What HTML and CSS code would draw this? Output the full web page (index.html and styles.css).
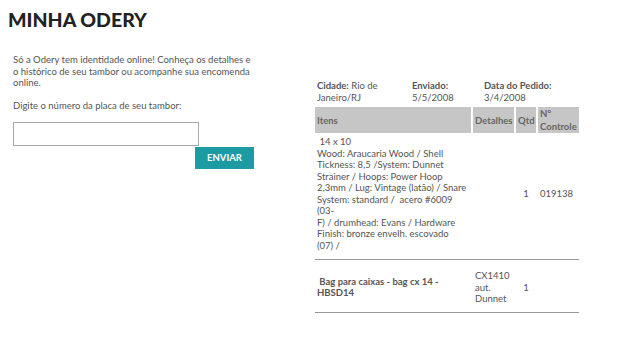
FILE: index.html
```html
<!DOCTYPE html>
<html lang="pt-BR">
<head>
    <meta charset="UTF-8">
    <meta name="viewport" content="width=device-width, initial-scale=1.0">
    <link rel="stylesheet" href="styles.css">
</head>
<body>
    <h1 class="page-title">MINHA ODERY</h1>

    <div class="content">
        <div class="intro">
            <p class="intro-text">Só a Odery tem identidade online! Conheça os detalhes e o histórico de seu tambor ou acompanhe sua encomenda online.</p>
            <p class="intro-label">Digite o número da placa de seu tambor:</p>
            <form class="plate-form" onsubmit="return false">
                <input type="text" class="plate-input">
                <button class="send-btn">ENVIAR</button>
            </form>
        </div>

        <div class="order">
            <div class="order-info">
                <div><b>Cidade:</b> Rio de Janeiro/RJ</div>
                <div><b>Enviado:</b><br>5/5/2008</div>
                <div><b>Data do Pedido:</b><br>3/4/2008</div>
            </div>

            <table class="items">
                <colgroup>
                    <col class="col-item">
                    <col class="col-detail">
                    <col class="col-qty">
                    <col class="col-ctrl">
                </colgroup>
                <thead>
                    <tr>
                        <th>Itens</th>
                        <th>Detalhes</th>
                        <th>Qtd</th>
                        <th>N°<br>Controle</th>
                    </tr>
                </thead>
                <tbody>
                    <tr class="item-row first">
                        <td>&nbsp;14 x 10<br>Wood: Araucaria Wood / Shell<br>Tickness: 8,5 /System: Dunnet<br>Strainer / Hoops: Power Hoop<br>2,3mm / Lug: Vintage (latão) / Snare<br>System: standard / &nbsp;acero #6009<br>(03-<br>F) / drumhead: Evans / Hardware<br>Finish: bronze envelh. escovado<br>(07) /</td>
                        <td></td>
                        <td class="qty">1</td>
                        <td>019138</td>
                    </tr>
                    <tr class="divider"><td colspan="4"></td></tr>
                    <tr class="item-row">
                        <td class="item-name">&nbsp;Bag para caixas - bag cx 14 - HBSD14</td>
                        <td>CX1410 aut. Dunnet</td>
                        <td class="qty">1</td>
                        <td></td>
                    </tr>
                    <tr class="divider"><td colspan="4"></td></tr>
                </tbody>
            </table>
        </div>
    </div>
</body>
</html>
```

FILE: styles.css
```css
body {
    font-family: Lato, "Open Sans", sans-serif;
    margin: 0;
    font-size: 9.5px;
    line-height: 11.5px;
    color: #555;
    background: white;
}
.page-title {
    margin: 6px 8px 0;
    font-size: 19.5px;
    line-height: 28px;
    font-weight: 900;
    color: #222;
}
.content {
    display: flex;
    align-items: flex-start;
}
.intro {
    width: 242px;
    margin: 20px 0 0 13px;
}
.intro p {
    margin: 0;
}
.intro-label {
    margin-top: 11.5px !important;
}
.plate-form {
    display: flex;
    flex-direction: column;
    align-items: flex-end;
    margin-top: 10px;
}
.plate-input {
    align-self: flex-start;
    width: 186px;
    height: 24px;
    margin: 0;
    padding: 2px 4px;
    border: 1px solid #aaa;
    box-sizing: border-box;
    font-family: inherit;
}
.send-btn {
    width: 59px;
    height: 22px;
    margin: 1px 1px 0 0;
    border: none;
    background: #1c9ba2;
    color: white;
    font-family: inherit;
    font-size: 9.5px;
    font-weight: 700;
    cursor: pointer;
}
.order {
    width: 268px;
    margin: 46px 0 0 58px;
}
.order-info {
    display: grid;
    grid-template-columns: 95px 72px 1fr;
    padding-left: 4px;
}
.order-info b {
    color: #555;
}
.items {
    margin-top: 4px;
    width: 268px;
    table-layout: fixed;
    border-collapse: separate;
    border-spacing: 2px 0;
}
.col-item { width: 156px; }
.col-detail { width: 41px; }
.col-qty { width: 20px; }
.col-ctrl { width: 41px; }
.items th {
    background: #c6c6c6;
    color: #666;
    text-align: left;
    font-weight: 700;
    height: 26px;
    padding: 0 2px;
    line-height: 13px;
    vertical-align: middle;
}
.items td {
    padding: 0 2px;
    vertical-align: middle;
}
.item-row.first td {
    padding-top: 3px;
    padding-bottom: 8px;
}
.item-row td {
    padding-top: 10px;
    padding-bottom: 7px;
}
.items td.qty {
    text-align: center;
}
.item-name {
    font-weight: 700;
}
.divider td {
    height: 0;
    padding: 0;
    border-top: 1px solid #999;
}
```
